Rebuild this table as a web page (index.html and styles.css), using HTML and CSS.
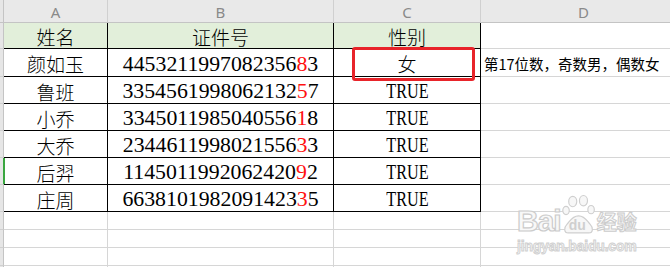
FILE: index.html
```html
<!DOCTYPE html>
<html lang="zh">
<head>
<meta charset="utf-8">
<title>Sheet</title>
<link rel="stylesheet" href="styles.css">
</head>
<body>
<div class="sheet">
  <div class="grid">
    <div class="rh corner"></div>
    <div class="ch">A</div>
    <div class="ch">B</div>
    <div class="ch">C</div>
    <div class="ch last">D</div>

    <div class="rh"></div>
    <div class="c hd tb">姓名</div>
    <div class="c hd tb">证件号</div>
    <div class="c hd tb tr">性别</div>
    <div class="c d note"></div>

    <div class="rh"></div>
    <div class="c tb zh">颜如玉</div>
    <div class="c tb num">4453211997082356<span class="red">8</span>3</div>
    <div class="c tb tr zh">女</div>
    <div class="c d note">第17位数，奇数男，偶数女</div>

    <div class="rh"></div>
    <div class="c tb zh">鲁班</div>
    <div class="c tb num">3354561998062132<span class="red">5</span>7</div>
    <div class="c tb tr"><span class="bool">TRUE</span></div>
    <div class="c d"></div>

    <div class="rh"></div>
    <div class="c tb zh">小乔</div>
    <div class="c tb num">3345011985040556<span class="red">1</span>8</div>
    <div class="c tb tr"><span class="bool">TRUE</span></div>
    <div class="c d"></div>

    <div class="rh"></div>
    <div class="c tb zh">大乔</div>
    <div class="c tb num">2344611998021556<span class="red">3</span>3</div>
    <div class="c tb tr"><span class="bool">TRUE</span></div>
    <div class="c d"></div>

    <div class="rh active"></div>
    <div class="c tb zh">后羿</div>
    <div class="c tb num">1145011992062420<span class="red">9</span>2</div>
    <div class="c tb tr"><span class="bool">TRUE</span></div>
    <div class="c d"></div>

    <div class="rh"></div>
    <div class="c tb zh">庄周</div>
    <div class="c tb num">6638101982091423<span class="red">3</span>5</div>
    <div class="c tb tr"><span class="bool">TRUE</span></div>
    <div class="c d"></div>

    <div class="rh"></div><div class="c e"></div><div class="c e"></div><div class="c e"></div><div class="c e"></div>
    <div class="rh"></div><div class="c e"></div><div class="c e"></div><div class="c e"></div><div class="c e"></div>
    <div class="rh"></div><div class="c e"></div><div class="c e"></div><div class="c e"></div><div class="c e"></div>
    <div class="rh"></div><div class="c e"></div><div class="c e"></div><div class="c e"></div><div class="c e"></div>
  </div>

  <div class="mark-box"></div>

  <div class="watermark">
    <div class="wm-logo">
      <span class="wm-bai">Bai</span>
      <span class="wm-paw">
        <svg width="34" height="42" viewBox="0 0 38 44">
          <g fill="#f7f7f7" stroke="#cfcfcf" stroke-width="1.3">
            <ellipse cx="12" cy="7" rx="4.5" ry="5.8"/>
            <ellipse cx="24" cy="6" rx="4.5" ry="5.8"/>
            <ellipse cx="4.5" cy="17" rx="3.6" ry="4.6"/>
            <ellipse cx="32.5" cy="16" rx="3.6" ry="4.6"/>
            <path d="M7 42 C2 42 2 36 5.5 32.5 C9 29 11 23 18.5 23 C26 23 28 29 31.5 32.5 C35 36 35 42 30 42 Z"/>
          </g>
        </svg>
        <span class="wm-du">du</span>
      </span>
      <span class="wm-jy">经验</span>
    </div>
    <div class="wm-url">jingyan.baidu.com</div>
  </div>
</div>
</body>
</html>
```
FILE: styles.css
```css
html, body {
  margin: 0;
  padding: 0;
  background: #fff;
  overflow: hidden;
}

.sheet {
  position: relative;
  width: 670px;
  height: 267px;
  overflow: hidden;
}

.grid {
  display: grid;
  grid-template-columns: 4px 104px 226px 147px 206px;
  grid-template-rows: 23px 26px 28px 27px 27px 27px 27px 27px 18px 18px 18px 18px;
}

.grid > div {
  box-sizing: border-box;
}

.rh {
  background: #e6e6e6;
  border-right: 1px solid #c4c4c4;
  border-bottom: 1px solid #d0d0d0;
}

.rh.corner {
  border-bottom: 1px solid #c4c4c4;
}

.rh.active {
  border-right: 2px solid #3aa640;
  margin-right: -1px;
}

.ch {
  background: #e9e9e9;
  border-right: 1px solid #d0d0d0;
  border-bottom: 1px solid #c4c4c4;
  display: flex;
  align-items: center;
  justify-content: center;
  font-family: "Noto Sans", "Liberation Sans", sans-serif;
  font-size: 15px;
  color: #8a8a8a;
  padding-top: 1px;
}

.c {
  border-right: 1px solid #d6d6d6;
  border-bottom: 1px solid #d6d6d6;
  display: flex;
  align-items: center;
  justify-content: center;
  color: #000;
  white-space: nowrap;
}

.c.tb {
  border-right-color: #000;
  border-bottom-color: #000;
}

.hd {
  background: #e2efda;
  font-family: "Noto Sans CJK SC", "Noto Sans", sans-serif;
  font-size: 19px;
  font-weight: 300;
  padding-top: 2px;
}

.zh {
  font-family: "Noto Sans CJK SC", "Noto Sans", sans-serif;
  font-size: 19px;
  font-weight: 300;
  padding-top: 2px;
}

.num {
  font-family: "Liberation Serif", "Times New Roman", serif;
  font-size: 21.8px;
  padding-top: 3px;
  padding-left: 0;
}

.red {
  color: #ff1010;
}

.bool {
  display: inline-block;
  font-family: "Liberation Serif", "Times New Roman", serif;
  font-size: 21px;
  transform: scaleX(0.77);
  padding-top: 3px;
}

.note {
  justify-content: flex-start;
  padding-left: 3px;
  font-family: "Noto Sans CJK SC", "Noto Sans", sans-serif;
  font-size: 14.5px;
  padding-top: 1px;
}

.mark-box {
  position: absolute;
  left: 352px;
  top: 47px;
  width: 123px;
  height: 34px;
  box-sizing: border-box;
  border: 3px solid #e8242a;
  border-radius: 3px;
}

.watermark {
  position: absolute;
  left: 517px;
  top: 192px;
  white-space: nowrap;
}

.wm-logo {
  display: flex;
  align-items: flex-end;
  height: 44px;
}

.wm-logo > span {
  flex-shrink: 0;
}

.wm-bai {
  font-family: "Liberation Sans", sans-serif;
  font-weight: bold;
  font-size: 30px;
  line-height: 30px;
  color: #f8f8f8;
  -webkit-text-stroke: 1.2px #cccccc;
  letter-spacing: -1px;
}

.wm-paw {
  position: relative;
  width: 34px;
  height: 42px;
  margin-left: 1px;
}

.wm-paw svg {
  position: absolute;
  left: 0;
  top: 0;
}

.wm-du {
  position: absolute;
  left: 7px;
  top: 23px;
  font-family: "Liberation Sans", sans-serif;
  font-weight: bold;
  font-size: 14px;
  color: #cfcfcf;
}

.wm-jy {
  font-family: "Noto Sans CJK SC", sans-serif;
  font-weight: bold;
  font-size: 20px;
  line-height: 28px;
  color: #f8f8f8;
  -webkit-text-stroke: 1px #cccccc;
  margin-left: 1px;
}

.wm-url {
  font-family: "Liberation Sans", sans-serif;
  font-weight: bold;
  font-size: 14px;
  color: #f4f4f4;
  -webkit-text-stroke: 0.9px #d0d0d0;
  margin-top: 2px;
  letter-spacing: -0.2px;
}
```
